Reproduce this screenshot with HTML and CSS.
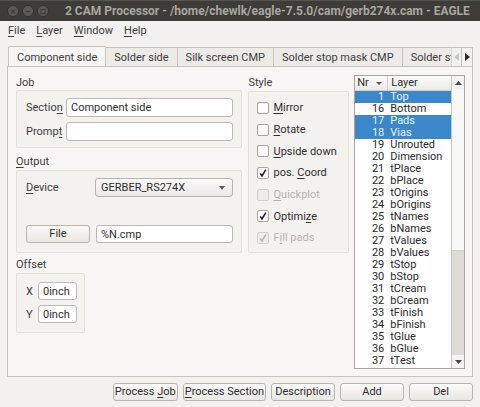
FILE: index.html
```html
<!DOCTYPE html>
<html lang="en">
<head>
    <meta charset="UTF-8">
    <title>2 CAM Processor</title>
    <link rel="stylesheet" href="styles.css">
</head>
<body>
<div class="janela">
    <div class="titulo">
        <div class="botoes-janela">
            <span class="bola"><svg width="11" height="11" viewBox="0 0 11 11"><path d="M3.5 3.5l4 4M7.5 3.5l-4 4" stroke="#3e3d39" stroke-width="1.3"/></svg></span>
            <span class="bola"><svg width="11" height="11" viewBox="0 0 11 11"><path d="M3 5.5h5" stroke="#3e3d39" stroke-width="1.3"/></svg></span>
            <span class="bola"><svg width="11" height="11" viewBox="0 0 11 11"><rect x="3.2" y="3.2" width="4.6" height="4.6" fill="none" stroke="#3e3d39" stroke-width="1.1"/></svg></span>
        </div>
        <span class="titulo-texto">2 CAM Processor - /home/chewlk/eagle-7.5.0/cam/gerb274x.cam - EAGLE</span>
    </div>

    <div class="menu">
        <span><u>F</u>ile</span>
        <span><u>L</u>ayer</span>
        <span><u>W</u>indow</span>
        <span><u>H</u>elp</span>
    </div>

    <div class="area">
        <div class="abas-linha">
            <div class="abas">
                <div class="aba ativa">Component side</div>
                <div class="aba">Solder side</div>
                <div class="aba">Silk screen CMP</div>
                <div class="aba">Solder stop mask CMP</div>
                <div class="aba">Solder stop mask SOL</div>
            </div>
            <div class="seta desligada"><svg width="5" height="8" viewBox="0 0 5 8"><path d="M5 0v8L0 4z" fill="#c9c6c0"/></svg></div>
            <div class="seta"><svg width="5" height="8" viewBox="0 0 5 8"><path d="M0 0v8l5-4z" fill="#2b2b2b"/></svg></div>
        </div>

        <div class="painel">
            <div class="coluna-esq">
                <div class="rotulo">Job</div>
                <div class="grupo job">
                    <div class="linha">
                        <label>Sectio<u>n</u></label>
                        <div class="campo">Component side</div>
                    </div>
                    <div class="linha">
                        <label>Promp<u>t</u></label>
                        <div class="campo"></div>
                    </div>
                </div>

                <div class="rotulo"><u>O</u>utput</div>
                <div class="grupo saida">
                    <div class="linha">
                        <label class="largo"><u>D</u>evice</label>
                        <div class="combo">GERBER_RS274X<span class="combo-seta"></span></div>
                    </div>
                    <div class="linha">
                        <button class="botao arquivo">File</button>
                        <div class="campo">%N.cmp</div>
                    </div>
                </div>

                <div class="rotulo">Offset</div>
                <div class="grupo offset">
                    <div class="linha">
                        <label class="curto">X</label>
                        <div class="campo">0inch</div>
                    </div>
                    <div class="linha">
                        <label class="curto">Y</label>
                        <div class="campo">0inch</div>
                    </div>
                </div>
            </div>

            <div class="coluna-estilo">
                <div class="rotulo">Style</div>
                <div class="grupo estilo">
                    <div class="opcao"><span class="caixa"></span><span><u>M</u>irror</span></div>
                    <div class="opcao"><span class="caixa"></span><span><u>R</u>otate</span></div>
                    <div class="opcao"><span class="caixa"></span><span><u>U</u>pside down</span></div>
                    <div class="opcao"><span class="caixa"><svg width="10" height="10" viewBox="0 0 10 10"><path d="M2.2 5.4l1.8 2.6L7.8 1.6" fill="none" stroke="#1e1e1e" stroke-width="1.5"/></svg></span><span>pos. <u>C</u>oord</span></div>
                    <div class="opcao inativa"><span class="caixa"></span><span><u>Q</u>uickplot</span></div>
                    <div class="opcao"><span class="caixa"><svg width="10" height="10" viewBox="0 0 10 10"><path d="M2.2 5.4l1.8 2.6L7.8 1.6" fill="none" stroke="#1e1e1e" stroke-width="1.5"/></svg></span><span>Optimi<u>z</u>e</span></div>
                    <div class="opcao inativa"><span class="caixa"><svg width="10" height="10" viewBox="0 0 10 10"><path d="M2.2 5.4l1.8 2.6L7.8 1.6" fill="none" stroke="#b8b5b0" stroke-width="1.5"/></svg></span><span>F<u>i</u>ll pads</span></div>
                </div>
            </div>

            <div class="lista">
                <div class="lista-corpo">
                    <div class="cabecalho">
                        <div class="cab-nr">Nr<span class="ordem"></span></div>
                        <div class="cab-layer">Layer</div>
                    </div>
                    <div class="camadas">
                        <div class="camada sel"><span class="nr">1</span>Top</div>
                        <div class="camada"><span class="nr">16</span>Bottom</div>
                        <div class="camada sel"><span class="nr">17</span>Pads</div>
                        <div class="camada sel"><span class="nr">18</span>Vias</div>
                        <div class="camada"><span class="nr">19</span>Unrouted</div>
                        <div class="camada"><span class="nr">20</span>Dimension</div>
                        <div class="camada"><span class="nr">21</span>tPlace</div>
                        <div class="camada"><span class="nr">22</span>bPlace</div>
                        <div class="camada"><span class="nr">23</span>tOrigins</div>
                        <div class="camada"><span class="nr">24</span>bOrigins</div>
                        <div class="camada"><span class="nr">25</span>tNames</div>
                        <div class="camada"><span class="nr">26</span>bNames</div>
                        <div class="camada"><span class="nr">27</span>tValues</div>
                        <div class="camada"><span class="nr">28</span>bValues</div>
                        <div class="camada"><span class="nr">29</span>tStop</div>
                        <div class="camada"><span class="nr">30</span>bStop</div>
                        <div class="camada"><span class="nr">31</span>tCream</div>
                        <div class="camada"><span class="nr">32</span>bCream</div>
                        <div class="camada"><span class="nr">33</span>tFinish</div>
                        <div class="camada"><span class="nr">34</span>bFinish</div>
                        <div class="camada"><span class="nr">35</span>tGlue</div>
                        <div class="camada"><span class="nr">36</span>bGlue</div>
                        <div class="camada"><span class="nr">37</span>tTest</div>
                    </div>
                </div>
                <div class="rolagem">
                    <div class="rol-seta"><svg width="7" height="4" viewBox="0 0 7 4"><path d="M0 4h7L3.5 0z" fill="#4a4a4a"/></svg></div>
                    <div class="rol-trilho"><div class="rol-polegar"></div></div>
                    <div class="rol-seta"><svg width="7" height="4" viewBox="0 0 7 4"><path d="M0 0h7L3.5 4z" fill="#4a4a4a"/></svg></div>
                </div>
            </div>
        </div>

        <div class="acoes">
            <button class="botao">Process <u>J</u>ob</button>
            <button class="botao"><u>P</u>rocess Section</button>
            <button class="botao">Description</button>
            <button class="botao">Add</button>
            <button class="botao">Del</button>
        </div>
    </div>
</div>
</body>
</html>
```

FILE: styles.css
```css
body {
    margin: 0;
    background: #f2f1f0;
    font-family: 'Roboto', 'Liberation Sans', sans-serif;
    font-size: 11px;
    color: #3c3c3c;
}

u {
    text-decoration-thickness: 1px;
    text-underline-offset: 2px;
}

.janela {
    width: 480px;
    height: 407px;
    overflow: hidden;
}

/* barra de titulo */
.titulo {
    height: 21px;
    background: #3d3c38;
    border-top: 1px solid #55544f;
    box-sizing: border-box;
    display: flex;
    align-items: center;
    white-space: nowrap;
    overflow: hidden;
}

.botoes-janela {
    display: flex;
    gap: 3px;
    padding-left: 7px;
    width: 51px;
}

.bola {
    width: 12px;
    height: 12px;
    border-radius: 50%;
    background: #5b5a55;
    border: 1px solid #35342f;
    box-sizing: border-box;
    display: flex;
    align-items: center;
    justify-content: center;
}

.titulo-texto {
    color: #a9a69f;
    font-weight: bold;
    font-size: 12px;
    padding-left: 7px;
}

/* menu */
.menu {
    height: 19px;
    display: flex;
    align-items: center;
    padding-left: 8px;
    gap: 11px;
    color: #3c3c3c;
}

/* abas */
.area {
    padding: 5px 7px 0 7px;
}

.abas-linha {
    display: flex;
    align-items: flex-end;
    height: 21px;
}

.abas {
    display: flex;
    align-items: flex-end;
    width: 444px;
    overflow: hidden;
    padding-left: 1px;
}

.aba {
    flex: none;
    height: 19px;
    line-height: 19px;
    padding: 0 8px;
    border: 1px solid #c8c4bd;
    border-bottom: none;
    border-left: none;
    background: #edebe8;
    color: #3c3c3c;
    box-sizing: border-box;
}

.aba:first-child {
    border-left: 1px solid #c8c4bd;
}

.aba.ativa {
    height: 21px;
    line-height: 21px;
    background: #f7f6f4;
    border-radius: 2px 2px 0 0;
    position: relative;
    top: 1px;
}

.seta {
    width: 11px;
    height: 19px;
    border: 1px solid #c8c4bd;
    border-left: none;
    border-bottom: none;
    background: #f2f1ef;
    box-sizing: border-box;
    display: flex;
    align-items: center;
    justify-content: center;
}

.seta.desligada {
    border-left: 1px solid #d8d5d0;
}

/* painel principal */
.painel {
    border: 1px solid #c8c4bd;
    background: #f7f6f4;
    height: 311px;
    box-sizing: border-box;
    display: flex;
    padding: 8px 7px 7px 8px;
}

.rotulo {
    height: 15px;
    line-height: 15px;
    color: #3c3c3c;
}

.grupo {
    border: 1px solid #e3e0db;
    border-radius: 2px;
    background: #f4f2ef;
    box-sizing: border-box;
}

.coluna-esq {
    width: 227px;
    margin-right: 6px;
}

.linha {
    display: flex;
    align-items: center;
}

.linha label {
    width: 40px;
    padding-left: 9px;
    flex: none;
}

.linha label.largo {
    width: 69px;
}

.linha label.curto {
    width: 12px;
}

.campo {
    flex: 1;
    height: 19px;
    line-height: 17px;
    background: #fff;
    border: 1px solid #bdb8b1;
    border-radius: 3px;
    box-sizing: border-box;
    padding: 0 4px;
    color: #2e2e2e;
}

.job {
    padding: 7px 8px 6px 0;
    height: 58px;
    display: flex;
    flex-direction: column;
    gap: 5px;
}

.saida {
    height: 83px;
    padding: 7px 8px 0 0;
}

.saida .linha + .linha {
    margin-top: 28px;
}

.saida .campo {
    height: 18px;
}

.combo {
    flex: 1;
    height: 19px;
    line-height: 17px;
    border: 1px solid #b8b3ab;
    border-radius: 3px;
    background: linear-gradient(#fbfbfa, #ebe9e6);
    box-sizing: border-box;
    padding: 0 5px;
    color: #2e2e2e;
    position: relative;
}

.combo-seta {
    position: absolute;
    right: 7px;
    top: 7px;
    border-left: 3.5px solid transparent;
    border-right: 3.5px solid transparent;
    border-top: 4px solid #5b5b5b;
}

.botao {
    font-family: inherit;
    font-size: 11px;
    color: #2e2e2e;
    height: 18px;
    min-width: 64px;
    padding: 0 1px;
    border: 1px solid #b8b3ab;
    border-radius: 3px;
    background: linear-gradient(#fafaf9, #e9e7e3);
    line-height: 16px;
}

.arquivo {
    width: 63px;
    margin: 0 6px 0 9px;
    flex: none;
}

.rotulo + .offset,
.rotulo + .saida {
    margin-top: 1px;
}

.offset {
    width: 69px;
    height: 60px;
    padding: 8px 8px 0 0;
}

.offset .linha + .linha {
    margin-top: 5px;
}

.offset .campo {
    height: 18px;
    flex: none;
    width: 39px;
}

.job + .rotulo {
    margin-top: 6px;
}

.saida + .rotulo {
    margin-top: 4px;
}

/* estilo */
.coluna-estilo {
    width: 101px;
    margin-right: 5px;
}

.estilo {
    margin-top: 1px;
    height: 162px;
    padding: 5px 0 0 8px;
}

.opcao {
    display: flex;
    align-items: center;
    height: 21.7px;
    color: #2e2e2e;
    white-space: nowrap;
}

.opcao.inativa {
    color: #b5b2ad;
}

.caixa {
    width: 12px;
    height: 12px;
    border: 1px solid #a8a39c;
    border-radius: 2px;
    background: #fff;
    box-sizing: border-box;
    margin-right: 4px;
    display: flex;
    align-items: center;
    justify-content: center;
    flex: none;
}

.inativa .caixa {
    background: #efedea;
    border-color: #d3d0cb;
}

/* lista de camadas */
.lista {
    width: 111px;
    height: 294px;
    border: 1px solid #a9a49d;
    display: flex;
    background: #fff;
    box-sizing: border-box;
}

.lista-corpo {
    flex: 1;
    overflow: hidden;
}

.cabecalho {
    display: flex;
    height: 14px;
    line-height: 14px;
    background: linear-gradient(#fbfbfa, #ecebe8);
    border-bottom: 1px solid #d0ccc6;
    color: #2e2e2e;
}

.cab-nr {
    width: 30px;
    padding-left: 2px;
    border-right: 1px solid #d0ccc6;
    position: relative;
}

.ordem {
    position: absolute;
    right: 5px;
    top: 6px;
    border-left: 3px solid transparent;
    border-right: 3px solid transparent;
    border-top: 3px solid #555;
}

.cab-layer {
    padding-left: 3px;
}

.camada {
    height: 12px;
    line-height: 12px;
    display: flex;
    color: #2a2a2a;
    white-space: nowrap;
}

.camada .nr {
    width: 29px;
    text-align: right;
    padding-right: 6px;
    flex: none;
}

.camada.sel {
    background: #3a88c9;
    color: #e8f2fb;
}

.rolagem {
    width: 12px;
    border-left: 1px solid #c9c5bf;
    display: flex;
    flex-direction: column;
    background: #f4f3f1;
}

.rol-seta {
    height: 13px;
    display: flex;
    align-items: center;
    justify-content: center;
    flex: none;
}

.rol-trilho {
    flex: 1;
    background: #dfdcd8;
}

.rol-polegar {
    height: 161px;
    background: #f8f8f7;
    border-bottom: 1px solid #d3d0cb;
}

/* botoes de baixo */
.acoes {
    display: flex;
    justify-content: flex-end;
    gap: 5px;
    margin-top: 6px;
}
```
